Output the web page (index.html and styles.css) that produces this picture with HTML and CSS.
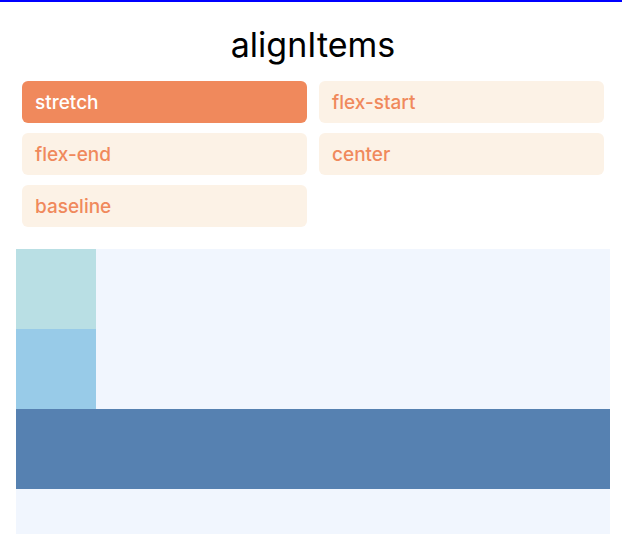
FILE: index.html
```html
<!DOCTYPE html>
<html lang="en">
<head>
<meta charset="utf-8">
<title>alignItems</title>
<link rel="stylesheet" href="styles.css">
</head>
<body>
  <div class="topbar"></div>
  <main class="page">
    <h1 class="title">alignItems</h1>
    <div class="options">
      <button class="option active">stretch</button>
      <button class="option">flex-start</button>
      <button class="option">flex-end</button>
      <button class="option">center</button>
      <button class="option">baseline</button>
    </div>
    <div class="preview">
      <div class="box box-powder"></div>
      <div class="box box-sky"></div>
      <div class="box-wide box-steel"></div>
    </div>
  </main>
</body>
</html>
```

FILE: styles.css
```css
html, body {
  margin: 0;
  padding: 0;
  background: #ffffff;
  overflow: hidden;
}

body {
  font-family: Inter, "Liberation Sans", Arial, sans-serif;
}

.topbar {
  height: 2px;
  background: #0000ff;
}

.page {
  padding: 0 12px 0 16px;
}

.title {
  margin: 23px 0 0;
  font-size: 34px;
  line-height: 40px;
  font-weight: 400;
  text-align: center;
  color: #000000;
}

.options {
  display: grid;
  grid-template-columns: 285px 285px;
  gap: 10px 12px;
  margin-top: 16px;
  padding: 0 6px;
}

.option {
  height: 42px;
  border: none;
  border-radius: 6px;
  background: #fcf2e6;
  color: #f0895c;
  font-family: Inter, "Noto Sans", sans-serif;
  font-size: 19px;
  font-weight: 500;
  text-align: left;
  padding: 0 0 0 13px;
  margin: 0;
}

.option.active {
  background: #f0895c;
  color: #ffffff;
}

.preview {
  margin-top: 22px;
  width: 594px;
  height: 285px;
  background: #f1f6fe;
  display: flex;
  flex-direction: column;
  align-items: stretch;
}

.box {
  width: 80px;
  height: 80px;
  flex: none;
}

.box-wide {
  height: 80px;
  flex: none;
}

.box-powder { background: #b9dfe4; }
.box-sky { background: #98cbe8; }
.box-steel { background: #5681b1; }
```
